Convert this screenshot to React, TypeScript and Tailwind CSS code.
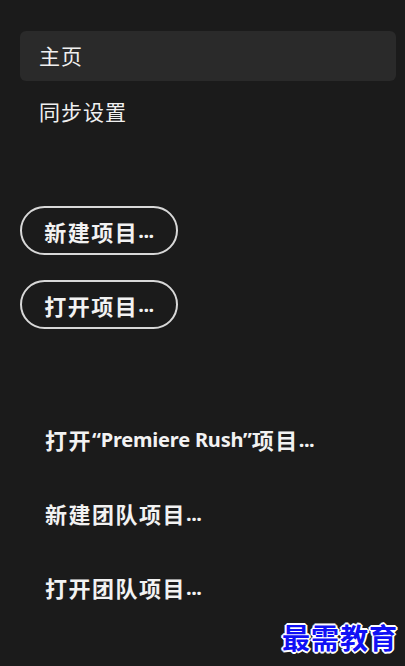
import React from "react";

const font = { fontFamily: '"Noto Sans CJK SC", "Noto Sans", sans-serif' };
const latin = { fontFamily: '"Noto Sans", "Open Sans", sans-serif' };

function Dots() {
  return (
    <span className="text-[20px] tracking-[-0.5px]" style={latin}>
      ...
    </span>
  );
}

function NavItem({ label, active }: { label: string; active?: boolean }) {
  return (
    <div
      className={
        "flex items-center h-[50px] pl-[19px] rounded-md text-[21px] tracking-[1px] text-[#f0f0f0] " +
        (active ? "bg-[#2a2a2a]" : "")
      }
    >
      {label}
    </div>
  );
}

function PillButton({ label }: { label: string }) {
  return (
    <button className="flex items-center justify-center w-[158px] h-[49px] rounded-full border-2 border-[#d8d8d8] text-[22px] font-bold text-[#f2f2f2] leading-none tracking-[1.5px]">
      {label}
      <Dots />
    </button>
  );
}

export default function App() {
  return (
    <div
      className="relative w-[405px] h-[666px] bg-[#1b1b1b] overflow-hidden"
      style={font}
    >
      <div className="flex flex-col pt-[31px] pl-[20px] pr-[9px]">
        <NavItem label="主页" active />
        <div className="mt-[6px]">
          <NavItem label="同步设置" />
        </div>
      </div>

      <div className="flex flex-col gap-[25px] pl-[20px] mt-[69px]">
        <PillButton label="新建项目" />
        <PillButton label="打开项目" />
      </div>

      <div className="flex flex-col gap-[47px] pl-[45px] mt-[97px] text-[22px] font-bold text-[#f2f2f2] leading-[27px] tracking-[1.5px]">
        <div className="h-[27px] flex items-center whitespace-nowrap">
          打开
          <span className="text-[20px] tracking-[-0.2px]" style={latin}>
            “Premiere Rush”
          </span>
          项目
          <Dots />
        </div>
        <div className="h-[27px] flex items-center">
          新建团队项目
          <Dots />
        </div>
        <div className="h-[27px] flex items-center">
          打开团队项目
          <Dots />
        </div>
      </div>

      <div
        className="absolute right-[7px] bottom-[15px] text-[28px] font-bold text-[#1010f5] tracking-[1px] leading-none"
        style={{
          fontFamily: '"Noto Sans CJK SC", serif',
          textShadow:
            "2px 0 0 #fff, -2px 0 0 #fff, 0 2px 0 #fff, 0 -2px 0 #fff, 1px 1px 0 #fff, -1px -1px 0 #fff, 1px -1px 0 #fff, -1px 1px 0 #fff",
        }}
      >
        最需教育
      </div>
    </div>
  );
}
